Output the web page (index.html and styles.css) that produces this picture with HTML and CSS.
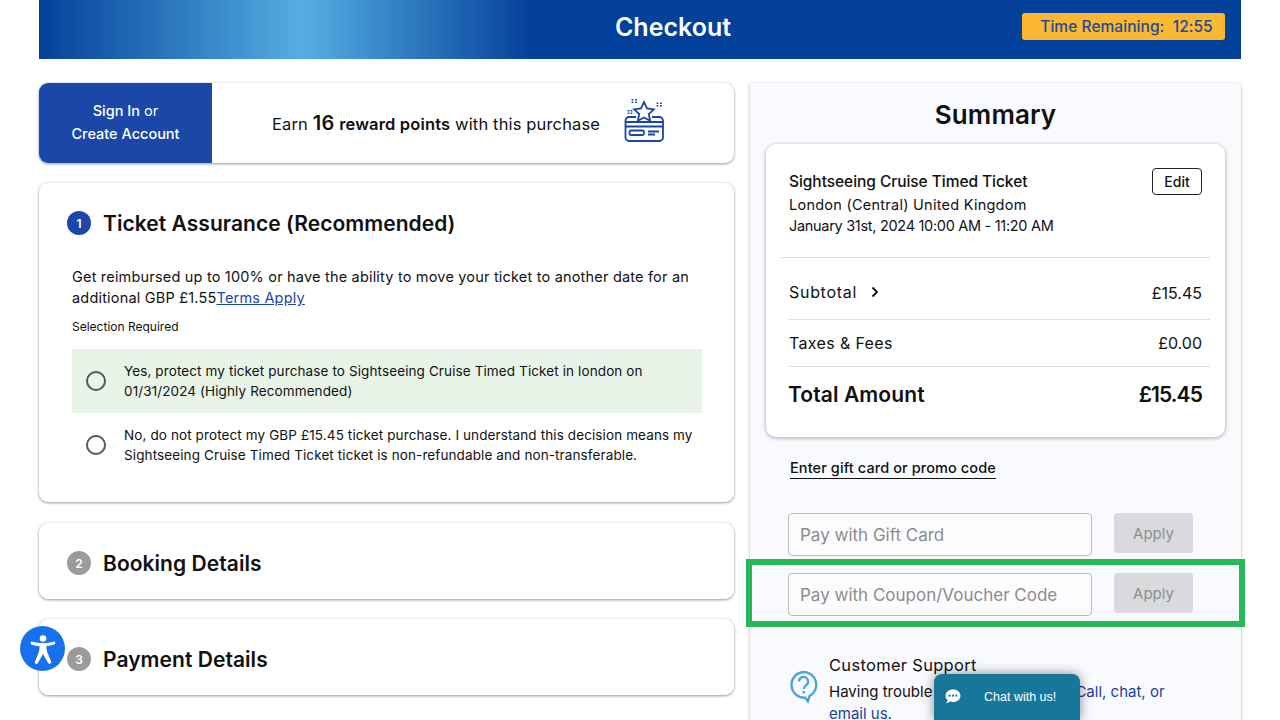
FILE: index.html
```html
<!DOCTYPE html>
<html lang="en">
<head>
<meta charset="utf-8">
<title>Checkout</title>
<link rel="stylesheet" href="styles.css">
</head>
<body>
<div class="page">
  <header class="topbar">
    <h1 class="topbar-title">Checkout</h1>
    <div class="timer">Time Remaining:&nbsp; 12:55</div>
  </header>
  <main class="layout">
    <section class="left">
      <div class="card rewards">
        <div class="signin"><div><b>Sign In</b> or</div><div><b>Create Account</b></div></div>
        <div class="earn">
          <span>Earn <b class="big">16</b> <b>reward points</b> with this purchase</span>
          <svg class="reward-icon" width="42" height="46" viewBox="0 0 42 46" fill="none" stroke="#1a45a8" stroke-width="1.800">
            <path d="M12 20H5a3.500 3.500 0 0 0-3.500 3.500v17A3.500 3.500 0 0 0 5 44h30.500a3.500 3.500 0 0 0 3.500-3.500v-17a3.500 3.500 0 0 0-3.500-3.500H28"/>
            <path d="M1.500 25h37.500M1.500 29.500h37.500"/>
            <rect x="5.500" y="33.500" width="14.500" height="4.500" rx="1.500"/>
            <path d="M24 34.500h11M24 37.500h7"/>
            <path d="M20 5l3 6.400 6.800.9-5 4.700 1.300 6.700-6.100-3.300-6.100 3.300 1.300-6.700-5-4.700 6.800-.9z"/>
            <path stroke-dasharray="1.500 1" d="M8.500 2v4M12 2v4M33.500 5.500v4M37 5.500v4M4.500 13v4M7.500 13v4"/>
          </svg>
        </div>
      </div>
      <div class="card step step-open">
        <h2 class="step-head"><span class="num num-on">1</span>Ticket Assurance (Recommended)</h2>
        <p class="lead">Get reimbursed up to 100% or have the ability to move your ticket to another date for an additional GBP £1.55<a href="#" class="link">Terms Apply</a></p>
        <p class="req">Selection Required</p>
        <div class="opt opt-yes"><span class="radio"></span><span>Yes, protect my ticket purchase to Sightseeing Cruise Timed Ticket in london on 01/31/2024 (Highly Recommended)</span></div>
        <div class="opt"><span class="radio"></span><span>No, do not protect my GBP £15.45 ticket purchase. I understand this decision means my Sightseeing Cruise Timed Ticket ticket is non-refundable and non-transferable.</span></div>
      </div>
      <div class="card step step-closed">
        <h2 class="step-head"><span class="num">2</span>Booking Details</h2>
      </div>
      <div class="card step step-closed">
        <h2 class="step-head"><span class="num">3</span>Payment Details</h2>
      </div>
    </section>
    <aside class="summary">
      <h2 class="summary-title">Summary</h2>
      <div class="order">
        <div class="order-top">
          <div>
            <div class="order-name">Sightseeing Cruise Timed Ticket</div>
            <div class="order-line">London (Central) United Kingdom</div>
            <div class="order-line order-date">January 31st, 2024 10:00 AM - 11:20 AM</div>
          </div>
          <button class="edit">Edit</button>
        </div>
        <div class="rows">
          <div class="row row-sub"><span class="sub-label">Subtotal <svg class="chev" width="8" height="12" viewBox="0 0 8 12" fill="none" stroke="#111" stroke-width="1.800"><path d="M1.500 1.500L6 6l-4.500 4.500"/></svg></span><span class="amt">£15.45</span></div>
          <div class="row row-tax"><span class="tax-label">Taxes &amp; Fees</span><span class="amt">£0.00</span></div>
          <div class="row row-total"><span class="total-label">Total Amount</span><span class="total-amt">£15.45</span></div>
        </div>
      </div>
      <a href="#" class="promo">Enter gift card or promo code</a>
      <div class="pay-row pay-first"><div class="field">Pay with Gift Card</div><div class="apply">Apply</div></div>
      <div class="pay-row"><div class="field">Pay with Coupon/Voucher Code</div><div class="apply">Apply</div></div>
      <div class="support">
        <svg class="support-icon" width="30" height="36" viewBox="0 0 30 36" fill="none" stroke="#4aa5dc" stroke-width="2.400">
          <path d="M14.500 2a12.800 12.800 0 0 1 6 24.100c-.6 2-.9 3.600-1.600 5.300-1-1.500-1.700-2.500-2.600-3.700A12.800 12.800 0 1 1 14.500 2z"/>
          <path d="M10 11.500a4.600 4.600 0 1 1 7.200 3.800c-1.600 1.100-2.500 2-2.500 3.700"/>
          <path d="M14.700 21v2.500"/>
        </svg>
        <div class="support-text">
          <div class="support-title">Customer Support</div>
          <div class="support-body">Having trouble with your booking? <a href="#" class="support-link">Call, chat, or email us.</a></div>
        </div>
      </div>
    </aside>
  </main>
</div>
<div class="highlight"></div>
<div class="a11y">
  <svg width="32" height="32" viewBox="0 0 32 32" fill="#fff">
    <circle cx="16" cy="5.500" r="3.300"/>
    <path d="M3.800 10.500c-.4-1 .1-1.900 1-2.100 3.700 1 7.300 1.700 11.200 1.700s7.500-.7 11.200-1.700c.9.200 1.400 1.100 1 2.100-.2.600-.6.900-1.200 1.100-2.600.7-5 1.200-7.600 1.500.1 3.500.6 5.800 1.700 8.200l3 7.300c.3 1-.1 1.800-1 2.100-.8.300-1.600 0-2-.8L16 21l-5.100 9.100c-.4.800-1.200 1.100-2 .8-.9-.3-1.300-1.100-1-2.100l3-7.300c1.100-2.400 1.600-4.700 1.700-8.200-2.600-.3-5-.8-7.600-1.500-.6-.2-1-.5-1.200-1.100z"/>
  </svg>
</div>
<div class="chat">
  <svg width="16" height="15" viewBox="0 0 16 15"><path fill="#fff" d="M8 .5c4.200 0 7.500 2.700 7.500 6.200S12.200 13 8 13c-1 0-1.900-.2-2.800-.5C4.200 13.300 2.900 14 1 14.300c.9-.9 1.500-2 1.700-3.100C1.300 10 .5 8.500.5 6.700.5 3.200 3.800.5 8 .5z"/><g fill="#17779a"><circle cx="4.700" cy="6.700" r="1.100"/><circle cx="8" cy="6.700" r="1.100"/><circle cx="11.300" cy="6.700" r="1.100"/></g></svg>
  <span class="chat-text">Chat with us!</span>
</div>
</body>
</html>
```
FILE: styles.css
```css
* { box-sizing: border-box; }
html, body { margin: 0; height: 720px; overflow: hidden; background: #fff; }
body { font-family: Inter, "Liberation Sans", sans-serif; color: #111; position: relative; }
h1, h2, p { margin: 0; }
b { font-weight: 600; }

.page { padding: 0 39px; }
.topbar {
  height: 59px;
  background: linear-gradient(90deg, #04419a 0, #55aee2 22%, #04409a 41%, #02409a 100%);
  display: grid; grid-template-columns: 1fr auto 1fr; align-items: center; padding-left: 66px;
}
.topbar-title { grid-column: 2; color: #fff; font-size: 25px; font-weight: 600; margin-top: -6px; }
.timer {
  grid-column: 3; justify-self: end; margin-right: 16px; margin-top: -6px;
  background: #fbb832; color: #1d4aa0; border-radius: 3px;
  width: 203px; height: 27px; font-size: 15.500px; font-weight: 500; letter-spacing: .05px; padding-left: 6px;
  display: flex; align-items: center; justify-content: center;
}

.layout { display: grid; grid-template-columns: 695px 491px; column-gap: 16px; margin-top: 24px; }
.left { display: flex; flex-direction: column; }
.card { background: #fff; border-radius: 9px; box-shadow: 0 1px 3px rgba(0,0,0,.38), 0 0 3px rgba(0,0,0,.08); }

.rewards { display: flex; height: 80px; overflow: hidden; }
.signin {
  width: 173px; background: #1a47a8; color: #fff; font-size: 14.500px; line-height: 23px; padding-bottom: 2px;
  display: flex; flex-direction: column; align-items: center; justify-content: center;
}
.signin b { font-weight: 500; }
.earn { flex: 1; display: flex; align-items: center; gap: 24px; padding-left: 60px; font-size: 16.500px; letter-spacing: .15px; }
.earn b { font-weight: 600; }
.earn .big { font-size: 20px; }
.reward-icon { margin-top: -6px; }

.step { margin-top: 20px; padding: 0 28px; }
.step-open { height: 319px; }
.step-closed { height: 76px; margin-top: 21px; }
.step-closed + .step-closed { margin-top: 20px; }
.step-head { display: flex; align-items: center; gap: 12px; font-size: 21px; font-weight: 600; letter-spacing: .05px; height: 80px; }
.num {
  width: 24px; height: 24px; border-radius: 50%; background: #9b9b9b; color: #fff;
  font-size: 12px; font-weight: 600; display: flex; align-items: center; justify-content: center; flex: none;
}
.num-on { background: #1a47a8; }
.lead { margin: 3px 0 0 5px; font-size: 14.500px; line-height: 21px; width: 630px; letter-spacing: .19px; }
.link { color: #1a47a8; }
.req { margin: 11px 0 0 5px; font-size: 12px; line-height: 16px; }
.opt { display: flex; align-items: center; gap: 18px; margin: 14px 0 0 5px; width: 630px; height: 64px; padding: 0 6px 0 14px; font-size: 13.500px; line-height: 20px; letter-spacing: .11px; }
.opt + .opt { margin-top: 0; height: 64px; }
.opt-yes { background: #e8f4e8; }
.radio { width: 20px; height: 20px; border: 2px solid #555; border-radius: 50%; flex: none; }

.summary { background: #f9fafe; box-shadow: 0 1px 3px rgba(0,0,0,.3); height: 637px; padding: 0 16px; }
.summary-title { text-align: center; font-size: 26px; font-weight: 600; padding-top: 15px; line-height: 34px; letter-spacing: .1px; }
.order { background: #fff; border-radius: 10px; box-shadow: 0 1px 4px rgba(0,0,0,.35); margin-top: 12px; height: 293px; padding: 0 15px; }
.order-top { display: flex; justify-content: space-between; align-items: flex-start; padding: 24px 8px 0 8px; height: 114px; border-bottom: 1px solid #ddd; }
.order-name { font-size: 15.500px; font-weight: 500; line-height: 26px; padding-top: 1px; margin-bottom: -1px; letter-spacing: -.05px; }
.order-line { font-size: 14.500px; line-height: 21px; letter-spacing: .25px; }
.order-date { letter-spacing: -.3px; }
.edit { font: 500 14px Inter, sans-serif; color: #111; width: 50px; height: 27px; background: #fff; border: 1px solid #222; border-radius: 4px; padding: 0; }
.rows { padding: 0 8px; }
.row { display: flex; justify-content: space-between; align-items: center; }
.row-sub { height: 62px; border-bottom: 1px solid #ddd; font-size: 16px; margin-right: -8px; padding: 8px 8px 0 0; }
.sub-label { letter-spacing: .7px; margin-top: -1px; }
.row-tax { height: 47px; border-bottom: 1px solid #ddd; font-size: 16px; margin-right: -8px; padding-right: 8px; }
.tax-label { letter-spacing: .35px; }
.row-total { height: 54px; font-size: 21px; font-weight: 600; }
.total-label { letter-spacing: .1px; margin-left: -1px; }
.total-amt { letter-spacing: -.9px; }
.chev { margin-left: 9px; }
.amt { font-size: 16px; }
.promo { display: inline-block; margin: 21px 0 0 24px; font-size: 14.500px; font-weight: 500; letter-spacing: .1px; color: #111; text-decoration: none; border-bottom: 1px solid #111; line-height: 20px; }
.pay-row { display: flex; gap: 22px; margin: 17px 0 0 22px; height: 43px; }
.pay-first { margin-top: 34px; }
.field { width: 304px; height: 43px; border: 1px solid #bcbcbc; border-radius: 4px; background: #fcfcfe; color: #8c8c8c; font-size: 17px; padding-left: 11px; display: flex; align-items: center; }
.apply { width: 79px; height: 40px; background: #d9dadd; color: #8e8e8e; border-radius: 3px; font-size: 15px; display: flex; align-items: center; justify-content: center; }
.support { display: flex; gap: 10px; margin: 37px 0 0 23px; width: 410px; }
.support-icon { margin-top: 17px; flex: none; }
.support-title { font-size: 16.500px; line-height: 24px; letter-spacing: .3px; }
.support-body { font-size: 15px; line-height: 22px; margin-top: 4px; width: 350px; }
.support-link { color: #1a3fa0; text-decoration: none; }

.highlight { position: absolute; left: 746px; top: 559px; width: 499px; height: 68px; border: 6px solid #27b85a; }
.a11y { position: absolute; left: 20px; top: 626px; width: 45px; height: 45px; border-radius: 50%; background: #1770ee; display: flex; align-items: center; justify-content: center; }
.chat { position: absolute; left: 934px; top: 674px; width: 146px; height: 46px; background: #17779a; border-radius: 8px 8px 0 0; box-shadow: 0 0 12px rgba(0,0,0,.45); color: #fff; font: 12px "Liberation Sans", Arial, sans-serif; display: flex; align-items: flex-start; padding: 15px 0 0 11px; }
.chat-text { margin-left: 23px; font-size: 12.500px; line-height: 16px; }
```
